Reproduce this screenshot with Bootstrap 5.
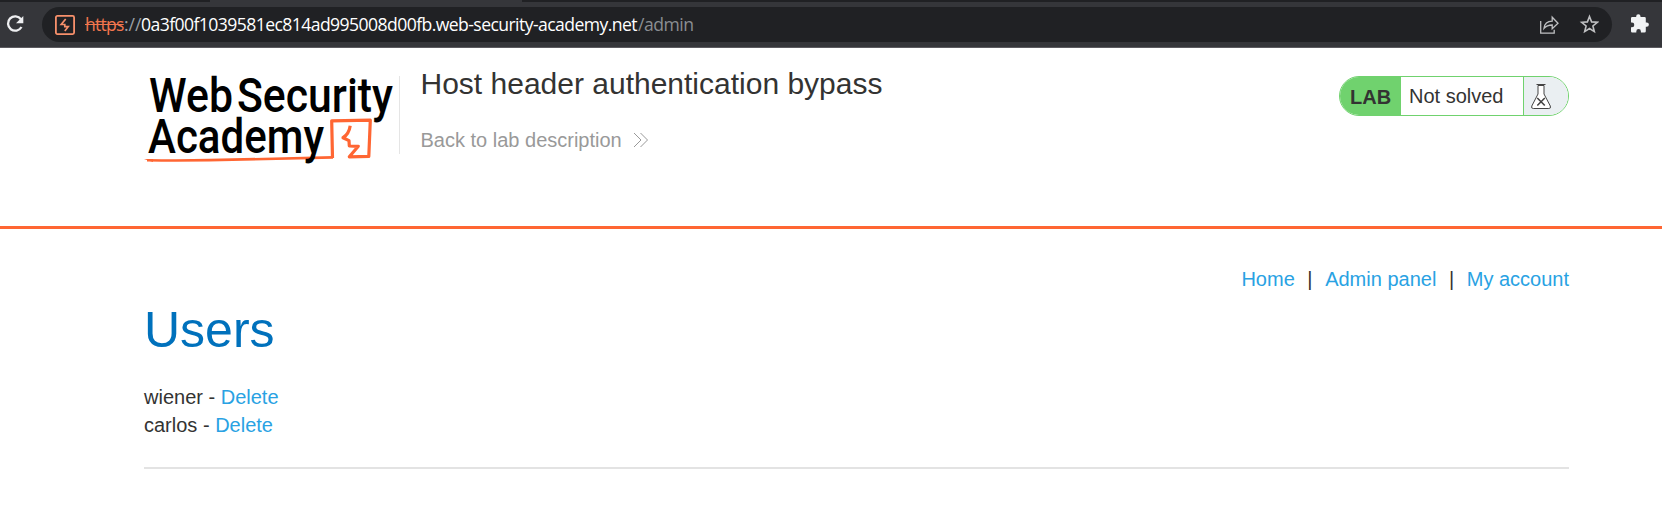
<!DOCTYPE html>
<html lang="en">
<head>
<meta charset="utf-8">
<title>Host header authentication bypass</title>
<link rel="stylesheet" href="https://cdn.jsdelivr.net/npm/bootstrap@5.3.0/dist/css/bootstrap.min.css">
<style>
body{font:20px/28px "Liberation Sans",Arial,sans-serif;color:#333332;background:#fff;overflow:hidden}
a{color:#29a2e3;text-decoration:none}
.tab-strip{height:2px;background:#202124}
.tab-edge{width:312px;height:2px;margin-left:210px;background:#35363a}
.toolbar{height:46px;background:#35363a;border-bottom:1px solid #5c5b60;padding:5px 12px 0 6px}
.omnibox{width:1570px;height:35px;margin-left:18px;border-radius:18px;background:#202124;padding:0 13px 0 12px}
.url{font:17.6px/35px "Open Sans","Noto Sans",sans-serif;color:#fff;white-space:pre;margin-left:9px}
.url span{display:inline-block}
.u-scheme{color:#f2764e;text-decoration:line-through;width:39px;letter-spacing:-.75px}
.u-sep{color:#9aa0a6;width:17px}
.u-host{width:497px;letter-spacing:-.58px}
.u-path{color:#8b8e92;letter-spacing:-.5px}
.extensions{margin-left:19px}
.page-wrap{width:1425px;margin:0 auto 0 144px}
.lab-header{height:181px;border-bottom:3px solid #ff6633}
.brand{width:256px;height:78px;margin-top:28px;border-right:1px solid #e5e5e5}
.lab-info{margin:20px 0 0 20.5px}
.lab-info h2{font-size:30px;line-height:32px;margin:0 0 26px}
.back{color:#999;line-height:28px}
.status{width:230px;height:40px;margin-top:28px;border:1px solid #70d26e;border-radius:20px;overflow:hidden;background:#fff}
.status strong{width:61px;background:#70d26e;padding-left:10px;line-height:40px;font-size:20px}
.status-text{width:122px;padding-left:8px;line-height:38px}
.flask{border-left:1px solid #70d26e;background:#eaeff2}
.top-links{margin-top:36px;line-height:28px}
.top-links span{width:30.4px;text-align:center}
h1{font-size:50px;line-height:60px;color:#0071bc;margin:7px 0 23px}
.rule{height:2px;background:#e3e3e3;margin-top:28px}
</style>
<script src="https://cdn.jsdelivr.net/npm/bootstrap@5.3.0/dist/js/bootstrap.bundle.min.js"></script>
</head>
<body>
<div class="tab-strip"><div class="tab-edge"></div></div>
<div class="toolbar d-flex">
  <svg class="flex-shrink-0" width="18" height="35" viewBox="0 0 18 35" fill="none"><path d="M15 12.2A7.2 7.2 0 1 0 15.5 20" stroke="#eeeff1" stroke-width="2.3"/><path d="M17.3 9v7.3H10z" fill="#eeeff1"/></svg>
  <div class="omnibox d-flex flex-shrink-0 align-items-center">
    <svg class="flex-shrink-0" width="22" height="22" viewBox="0 0 22 22" fill="none" stroke="#f7906b" stroke-width="1.8"><rect x="1.9" y="1.9" width="18.2" height="18.2" rx="1.5"/><path stroke-width="1.7" d="M11.7 5 7.2 10.5h3.6v2.2h3.4L10.8 17"/></svg>
    <div class="url"><span class="u-scheme">https</span><span class="u-sep">://</span><span class="u-host">0a3f00f1039581ec814ad995008d00fb.web-security-academy.net</span><span class="u-path">/admin</span></div>
    <svg class="ms-auto" width="60" height="35" viewBox="0 0 60 35" fill="none" stroke="#bfc0c2" stroke-width="1.3"><path d="M1.7 14v12.2h13.5v-3.5M5 21.4c.5-4.6 3.5-7.1 8.2-7.2v-4l5.8 6-5.8 5.5V18c-3.5 0-6 .8-8.2 3.4z"/><path stroke-width="1.6" d="m50.5 9.5 2.1 5.4 5.7.4-4.4 3.7 1.4 5.6-4.8-3.1-4.8 3.1 1.4-5.6-4.4-3.7 5.7-.4z"/></svg>
  </div>
  <svg class="extensions flex-shrink-0" width="18" height="35" viewBox="0 0 18 35"><path fill="#f1f3f4" d="M0 11.3q0-1.2 1.2-1.2h4V9.3a2.1 2.1 0 0 1 4.3 0v.8h4q1.3 0 1.3 1.2v4.1h.9a2.2 2.2 0 0 1 0 4.4h-.9v4.4q0 1.2-1.3 1.2H9.9v-1a2.3 2.3 0 0 0-4.6 0v1H1.2Q0 25.4 0 24.2v-4h1a2.3 2.3 0 0 0 0-4.6H0z"/></svg>
</div>
<header class="lab-header">
  <div class="page-wrap d-flex">
    <div class="brand flex-shrink-0">
      <svg width="255" height="94" viewBox="0 0 255 94" overflow="visible">
        <g fill="none" stroke="#ff6633" stroke-width="3.2" stroke-linejoin="round">
          <path d="M188.5 82 187.7 44.8 226.3 44.2 224.8 80.4 205.3 80.8 214.3 70.3 205.3 70 205 64.6 199 61.7Q205 58 206.2 49.7"/>
          <path stroke-width="2.6" d="M3 84.3Q50 85 100 83.4L189 81.4"/>
        </g>
        <path fill="#ff6633" d="m0 83 9-.1v3z"/>
        <g font-family="Roboto,sans-serif" font-weight="500" font-size="47.5">
          <text x="5" y="36" textLength="84" lengthAdjust="spacingAndGlyphs">Web</text>
          <text x="93" y="36" textLength="156" lengthAdjust="spacingAndGlyphs">Security</text>
          <text x="4" y="77" textLength="176" lengthAdjust="spacingAndGlyphs">Academy</text>
        </g>
      </svg>
    </div>
    <div class="lab-info">
      <h2 class="fw-normal">Host header authentication bypass</h2>
      <a href="#" class="back d-flex align-items-center">Back to lab description<svg class="ms-2" width="20" height="18" viewBox="0 0 20 18" fill="none" stroke="#999"><path d="m4 2 7 7-7 7M10.5 2l7 7-7 7"/></svg></a>
    </div>
    <div class="status d-flex ms-auto">
      <strong>LAB</strong><div class="status-text">Not solved</div>
      <div class="flask flex-grow-1"><svg class="d-block" width="36" height="38" viewBox="0 0 36 38" fill="#fff" stroke="#444" stroke-width="1"><path d="M14 8.5V17L7.8 29q-1 2.5 1.5 2.5h15.5q2.5 0 1.5-2.5L20 17V8.5z"/><path d="M12.5 7.5h9" stroke-width="1.2"/><path d="m13.3 21 7.5 7.5m0-7.5-7.5 7.5" stroke-width="1.6"/></svg></div>
    </div>
  </div>
</header>
<main class="page-wrap">
  <nav class="top-links d-flex justify-content-end"><a href="#">Home</a><span>|</span><a href="#">Admin panel</a><span>|</span><a href="#">My account</a></nav>
  <h1 class="fw-normal">Users</h1>
  <div>wiener - <a href="#">Delete</a></div>
  <div>carlos - <a href="#">Delete</a></div>
  <div class="rule"></div>
</main>
</body>
</html>
